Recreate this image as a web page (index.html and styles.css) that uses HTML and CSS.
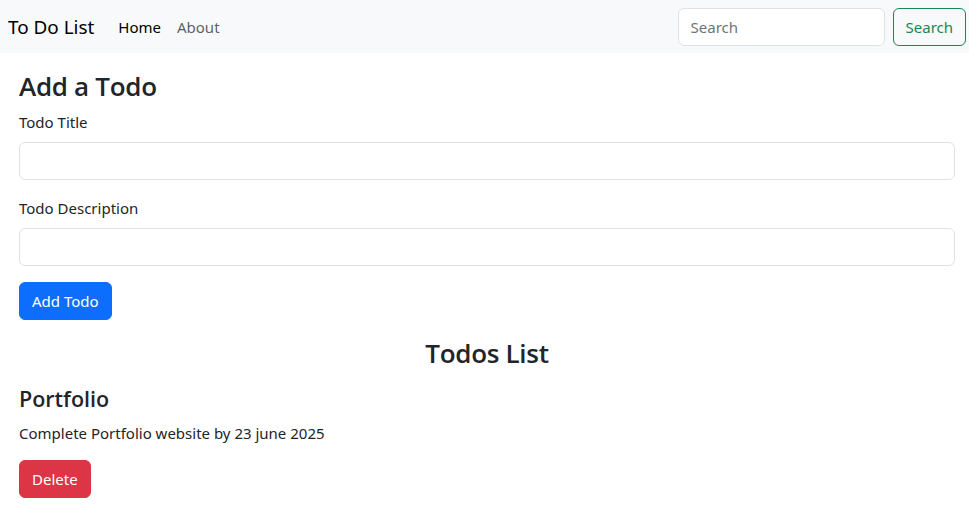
FILE: index.html
```html
<!DOCTYPE html>
<html lang="en">
<head>
<meta charset="utf-8">
<title>To Do List</title>
<link rel="stylesheet" href="styles.css">
</head>
<body>
<nav class="navbar">
  <div class="nav-left">
    <a class="brand" href="#">To Do List</a>
    <ul class="nav-links">
      <li><a class="nav-link active" href="#">Home</a></li>
      <li><a class="nav-link" href="#">About</a></li>
    </ul>
  </div>
  <form class="search-form">
    <input class="search-input" type="search" placeholder="Search">
    <button class="btn btn-outline-success" type="button">Search</button>
  </form>
</nav>
<main class="content">
  <section class="add-section">
    <h2 class="heading">Add a Todo</h2>
    <div class="field">
      <label class="field-label">Todo Title</label>
      <input class="field-input" type="text">
    </div>
    <div class="field">
      <label class="field-label">Todo Description</label>
      <input class="field-input" type="text">
    </div>
    <button class="btn btn-primary" type="button">Add Todo</button>
  </section>
  <section class="list-section">
    <h2 class="heading center">Todos List</h2>
    <div class="todo">
      <h4 class="todo-title">Portfolio</h4>
      <p class="todo-desc">Complete Portfolio website by 23 june 2025</p>
      <button class="btn btn-danger" type="button">Delete</button>
    </div>
  </section>
</main>
</body>
</html>
```
FILE: styles.css
```css
* { box-sizing: border-box; }
html, body { margin: 0; padding: 0; }
body {
  font-family: "Noto Sans", "Open Sans", sans-serif;
  font-size: 15px;
  line-height: 24px;
  color: #212529;
  background: #fff;
}
.navbar {
  display: flex;
  align-items: center;
  justify-content: space-between;
  height: 53px;
  background: #f8f9fa;
  padding: 0 3px 0 8px;
}
.nav-left { display: flex; align-items: center; }
.brand {
  font-size: 18.9px;
  line-height: 30px;
  color: #000;
  text-decoration: none;
  margin-right: 16px;
}
.nav-links { display: flex; list-style: none; margin: 0; padding: 0; }
.nav-link {
  display: block;
  padding: 8px;
  color: rgba(0,0,0,.65);
  text-decoration: none;
}
.nav-link.active { color: #000; }
.search-form { display: flex; align-items: center; gap: 8px; }
.search-input {
  width: 207px;
  height: 38px;
  border: 1px solid #dee2e6;
  border-radius: 6px;
  padding: 6px 12px;
  font: inherit;
  color: #212529;
  background: #fff;
}
.search-input::placeholder { color: #6c757d; }
.btn {
  display: inline-block;
  height: 38px;
  padding: 6px 12px;
  font: inherit;
  border: 1px solid transparent;
  border-radius: 6px;
  cursor: pointer;
}
.btn-outline-success { color: #198754; border-color: #198754; background: transparent; }
.btn-primary { color: #fff; background: #0d6efd; border-color: #0d6efd; }
.btn-danger { color: #fff; background: #dc3545; border-color: #dc3545; }
.content { padding: 0 14px 0 19px; }
.add-section { padding-top: 17px; }
.heading {
  font-family: "Open Sans", "Noto Sans", sans-serif;
  font-size: 26px;
  line-height: 33px;
  font-weight: 600;
  letter-spacing: -0.3px;
  margin: 0 0 7px;
}
.center { text-align: center; }
.field { margin-bottom: 16px; display: flex; flex-direction: column; }
.field-label { margin-bottom: 8px; }
.field-input {
  height: 38px;
  border: 1px solid #dee2e6;
  border-radius: 6px;
  padding: 6px 12px;
  font: inherit;
}
.list-section { padding-top: 17px; }
.todo { padding-top: 8px; }
.todo-title {
  font-family: "Open Sans", "Noto Sans", sans-serif;
  font-size: 21.5px;
  line-height: 28px;
  font-weight: 600;
  margin: 0 0 8px;
}
.todo-desc { margin: 0 0 15px; }
```
